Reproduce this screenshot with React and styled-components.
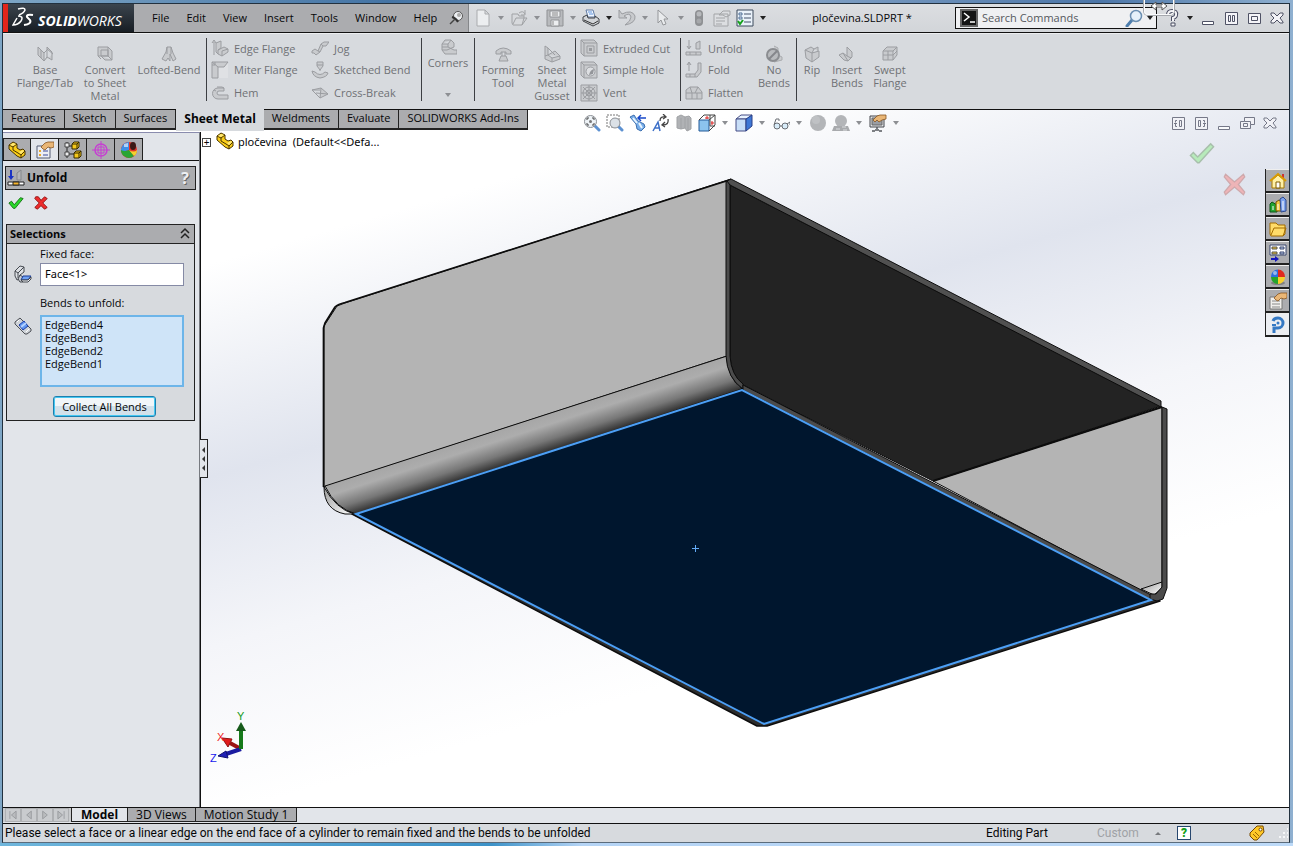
import React, { useState } from "react"
import styled, { createGlobalStyle, css } from "styled-components"

const GlobalStyle = createGlobalStyle`
  * {
    box-sizing: border-box;
  }

  body {
    margin: 0;
    font-family: "Open Sans", "Noto Sans", sans-serif;
    font-size: 11px;
    line-height: 14px;
    color: #050608;
  }

  button, input {
    font: inherit;
    color: inherit;
  }

  svg {
    display: block;
    flex: none;
  }
`

const plainButton = css`
  display: flex;
  align-items: center;
  justify-content: center;
  margin: 0;
  padding: 0;
  border: 0;
  background: none;
`

/* ---------- icons ---------- */

const G = { fill: "#c9cbce", stroke: "#9b9da1" }

const Ball = () => (
  <>
    <ellipse cx="9" cy="15" rx="7" ry="2" fill="#555" opacity=".5" />
    <path d="M9 9V1.500A7 7 0 0 0 2 9Z" fill="#2c6fe0" />
    <path d="M9 9V1.500A7 7 0 0 1 16 9Z" fill="#e02a20" />
    <path d="M9 9H2A7 7 0 0 0 9 16Z" fill="#25a52c" />
    <path d="M9 9H16A7 7 0 0 1 9 16Z" fill="#f6cf2d" />
    <circle cx="6" cy="5" r="2" fill="#fff" opacity=".5" />
  </>
)

const Hand = () => (
  <path d="M5 6 9 2 12 1H18V6L15 7 12 6 9 9 7 8Z" fill="#e9b676" stroke="#855422" strokeWidth=".8" />
)

const PartShape = () => (
  <>
    <path d="M1 4 5 1 9 3V7L12 9 15 8 17 10V14L13 17 9 15 1 8Z" fill="#f9cd18" stroke="#4a3500" />
    <path d="M1 4 5 6 9 3M5 6V9L10 12 13 14 17 10M13 14V17" fill="none" stroke="#4a3500" />
    <path d="M2 4 5 2 8 3 5 5Z M11 11 15 9 16 10 13 13Z" fill="#ffe979" />
  </>
)

const icons = {
  baseFlange: <path d="M2 2V10L8 16V8Z M8 16 11 12V4L17 9 M8 8 11 5 M11 12 16 15V7L11 2V4 M5 5V13" {...G} />,
  convert: <path d="M2 2H12V11H2Z M5 5H12V11H5Z M12 2 16 6V15L12 11 M5 11 9 15H16 M2 11 5 14" {...G} />,
  loft: <path d="M7 2H11L13 8 16 14 13 16 10 9V16L8 13 6 16 2 14 6 7Z M7 2V9 M11 2V9" {...G} />,
  edgeFlange: <path d="M3 16V3 M1 4 3 1 5 4 M5 4 10 2V9L7 11V15L5 13Z M7 11 13 8 17 10V13L11 17 7 15 M11 12V17 M11 12 17 10" {...G} />,
  miter: (
    <>
      <path d="M1 1H17V17H1Z" fill="#dfe1e4" />
      <path d="M1 1H17L13 6H7V17H1Z M1 1 7 6 M4 1V4 M1 4H4" {...G} />
    </>
  ),
  hem: <path d="M17 15H7A5 5 0 0 1 7 4H13V7H8A2 2 0 0 0 8 11H17Z M3 6 5 7 M13 4 11 3H6" {...G} />,
  jog: <path d="M1 12 4 10 7 12 10 5 13 3H18L15 7H12L9 13 5 16 3 14H1Z M7 12 9 13 M10 5 12 7" {...G} />,
  sketched: <path d="M6 1H12V5L9 9 6 5Z M6 4H12 M8 9H10 M1 10 4 11Q9 16 14 11L17 12Q16 16 9 17 2 16 1 10Z" {...G} />,
  cross: <path d="M1 6 10 4 17 10 9 14Z M1 6 9 14 10 4 M5 9 17 10 M1 6H9" {...G} />,
  corners: <path d="M3 6 6 2H12L15 5V9L8 12H3Z M3 6H9L12 2 M9 6V9L15 12H18V16H6L3 12 M9 9H3" {...G} />,
  forming: <path d="M2 6Q9 0 17 6V9H12V7H7V9H2Z M7 11H12L14 16H5Z M8 7V11 M11 7V11" {...G} />,
  gusset: <path d="M2 1 5 3V10L12 6 17 11V14L9 17 2 14Z M5 10 9 13 17 11 M5 3 12 10 M9 13V17 M2 11 5 10" {...G} />,
  cut: (
    <>
      <path d="M1 1H14L17 4V17H4L1 14Z M4 4H17 M4 4V17 M1 1 4 4 M7 7H14V14H7Z" {...G} />
      <path d="M9 9H12V12H9Z" fill="#999b9f" />
    </>
  ),
  hole: (
    <>
      <path d="M1 1H14L17 4V17H4L1 14Z M4 4H17 M4 4V17 M1 1 4 4" {...G} />
      <circle cx="10.500" cy="10.500" r="4.500" fill="#dddfe2" stroke="#9b9da1" />
      <path d="M9 14Q10 9 14 8L13 13Z" fill="#94969a" />
    </>
  ),
  vent: (
    <>
      <path d="M1 1H17V17H1Z" {...G} />
      <circle cx="9" cy="9" r="6" fill="none" stroke="#9b9da1" />
      <circle cx="9" cy="9" r="3" fill="none" stroke="#9b9da1" />
      <path d="M9 1V17M1 9H17M3 3 15 15M15 3 3 15" stroke="#9b9da1" />
    </>
  ),
  unfold: <path d="M4 1V9 M2 7 4 10 6 7 M1 13H16V16H1Z M5 13V16 M11 13V16 M11 10V4L15 2V10Z" {...G} />,
  fold: <path d="M4 10V2 M2 4 4 1 6 4 M1 13H10L13 9V2H16V11L12 16H1Z M5 13V16 M10 13V16" {...G} />,
  flatten: <path d="M1 6 5 3H13L17 8V15H1Z M1 9H17 M5 3 7 9V15 M13 3 10 9 M12 9V15" {...G} />,
  noBends: (
    <>
      <path d="M9 1 13 3V10L17 12V15L9 17" fill="#c9cbce" stroke="#a9abae" />
      <circle cx="8" cy="10" r="6" fill="#b9bbbe" stroke="#8b8d91" strokeWidth="2" />
      <path d="M12 6 4 14" stroke="#85878b" strokeWidth="2" />
    </>
  ),
  rip: <path d="M2 5 8 2 11 4 9 8 16 6V12L9 17 3 13Z M2 5 9 8V17 M11 4 15 2V6" {...G} />,
  insertBends: <path d="M1 10 5 8 9 11V2L14 7V12L10 16 6 15Z M9 11 13 13 M5 8 10 16" {...G} />,
  swept: <path d="M2 6 6 2H16V10L12 15H2Z M2 6H12V15 M12 6 16 2 M7 6V15 M2 10H12L16 6" {...G} />,
  pin: (
    <>
      <path d="M8 10 3 15" stroke="#444" strokeWidth="1.500" />
      <circle cx="11" cy="7" r="4.500" fill="#eef0f3" stroke="#555" />
      <circle cx="12" cy="6" r="2" fill="#aaa" />
      <path d="M5 8Q9 9 11 13" fill="none" stroke="#333" strokeWidth="2" />
    </>
  ),
  newFile: <path d="M3 1H11L15 5V17H3Z M11 1V5H15" fill="#eceef0" stroke="#a9abae" />,
  open: <path d="M2 5H8L9 7H14V9L12 16H3L2 14Z M3 15 6 9H17L12 16 M9 4Q13 1 15 5M15 1V6H11" fill="#d7d9dc" stroke="#a0a2a5" />,
  save: (
    <>
      <path d="M1 1H17V17H1Z" fill="#b9bbbe" stroke="#8f9194" />
      <path d="M4 2H14V8H4ZM5 11H13V17H5Z" fill="#eceef0" stroke="#909295" />
      <path d="M6 4H12M6 6H12M7 12V16" stroke="#888" />
    </>
  ),
  print: (
    <>
      <path d="M4 1H11L13 8H6Z" fill="#f2f7ff" stroke="#607ba3" />
      <path d="M6 3H10M7 5H11" stroke="#5c92dd" />
      <path d="M1 8 5 6 6 9H13V7L17 10V14L11 17 1 12Z" fill="#d2d5d9" stroke="#3e4146" />
      <path d="M2 11 11 15 16 12" fill="none" stroke="#333" />
    </>
  ),
  undo: <path d="M1 1V9H9L6 7Q12 3 13 8 13 12 7 16 18 14 17 7 14 0 4 5Z" fill="#c8cacd" stroke="#9b9da1" />,
  pointer: <path d="M4 1V14L7 11 9 16 12 15 10 10H14Z" fill="#e9ebed" stroke="#95979a" />,
  traffic: (
    <>
      <rect x="5" y="1" width="8" height="16" rx="4" fill="#8e9093" />
      <circle cx="9" cy="5" r="2.500" fill="#b7b9bc" />
      <circle cx="9" cy="12" r="2.500" fill="#a6a8ab" />
    </>
  ),
  fileProps: <path d="M1 5H15V17H1Z M3 9H12M3 12H12M3 15H9 M6 6 10 2H17V6L13 8 10 6Z" fill="#dcdee1" stroke="#a2a4a7" />,
  options: (
    <>
      <path d="M1 1H17V17H1Z" fill="#eaf2fa" stroke="#3d4a5c" />
      <path d="M8 5H15M8 9H15M8 13H15" stroke="#44536a" />
      <path d="M3 4H6V6H3ZM3 8H6V10H3Z" fill="none" stroke="#4f6f95" />
      <path d="M2 12 4 15 7 11" fill="none" stroke="#17a21d" strokeWidth="2" />
    </>
  ),
  zoomFit: (
    <>
      <path d="M12 12 16 16" stroke="#5d91d1" strokeWidth="3" strokeLinecap="round" />
      <circle cx="7.500" cy="7.500" r="6" fill="#eef3f7" stroke="#8a8e94" />
      <path d="M4 6V4H6M9 4H11V6M11 9V11H9M6 11H4V9" fill="none" stroke="#444" />
      <circle cx="7.500" cy="7.500" r="1.500" fill="#777" />
    </>
  ),
  zoomArea: (
    <>
      <path d="M1 1H13V13H1Z" fill="none" stroke="#777" strokeDasharray="2 1" />
      <path d="M13 13 16 16" stroke="#5d91d1" strokeWidth="3" strokeLinecap="round" />
      <circle cx="9" cy="9" r="5" fill="#dbe1e7" stroke="#8a8e94" />
    </>
  ),
  prevView: (
    <>
      <path d="M1 3 5 1 9 7 15 10 16 13 12 17 8 15 7 10Z" fill="#77ade9" stroke="#3d70b0" />
      <path d="M4 4 8 9M10 9 13 14" stroke="#e9f5ff" strokeWidth="2" />
      <path d="M17 4H10M12 1 9 4 12 7" fill="none" stroke="#1647c9" strokeWidth="1.500" />
    </>
  ),
  rotate: (
    <>
      <path d="M1 17 6 8 8 17M3 14H8" fill="none" stroke="#3d70c8" strokeWidth="1.500" />
      <path d="M8 7Q8 2 13 3M11 0 14 3 11 5M16 5Q17 11 11 11M13 8 10 11 13 13" fill="none" stroke="#444" strokeWidth="1.300" />
    </>
  ),
  section: <path d="M2 3 6 1 10 3 14 2 16 4V15L12 17 10 14 6 15 2 14Z M6 4V15 M10 3V14 M13 4V16" fill="#b0b2b5" stroke="#a0a2a5" />,
  orient: (
    <>
      <path d="M6 1H17V11L11 17V6H1Z" fill="#fff" />
      <path d="M1 6H11V17H1Z" fill="#8cc3ee" stroke="#245b98" />
      <path d="M1 6 6 1H17V11L11 17M11 6 17 1M12 1V12H17" fill="none" stroke="#444" />
      <path d="M9 2V5M7 4H11M14 7V11M13 9H16" stroke="#d22" />
    </>
  ),
  display: (
    <>
      <path d="M1 5 6 1H17L12 5Z" fill="#e9f3ff" stroke="#444c85" />
      <path d="M1 5H11V17H1Z" fill="#c8def7" stroke="#444c85" />
      <path d="M11 5 17 1V12L11 17Z" fill="#3f78d6" stroke="#2a3f85" />
    </>
  ),
  glasses: (
    <>
      <circle cx="5" cy="12" r="3" fill="#d7ebf8" stroke="#6a6e74" />
      <circle cx="13" cy="12" r="3" fill="#d7ebf8" stroke="#6a6e74" />
      <path d="M2 11 4 5H7V7M8 12H10M15 10 18 8V11" fill="none" stroke="#6a6e74" />
    </>
  ),
  greyBall: (
    <>
      <circle cx="9" cy="9" r="8" fill="#b3b5b8" />
      <circle cx="7" cy="6" r="4" fill="#bfc1c4" />
    </>
  ),
  scene: (
    <>
      <circle cx="9" cy="7" r="6" fill="#b3b5b8" />
      <path d="M2 12H16L18 17H0Z" fill="#a8aaad" />
      <path d="M4 15H8M10 13H14M11 16H15" stroke="#d9dbde" />
    </>
  ),
  viewSettings: (
    <>
      <path d="M1 2H15V13H1Z" fill="#e3e5e8" stroke="#44474d" />
      <path d="M3 4H13V11H3Z" fill="#9b9ea4" stroke="#666" />
      <path d="M6 16H10M3 17H6M10 17H13M8 13V15" stroke="#55585e" strokeWidth="1.500" />
      <path d="M4 6 8 2 11 1H17V5L13 6 10 8 8 6 6 8Z" fill="#e9b676" stroke="#855422" strokeWidth=".8" />
    </>
  ),
  part: <PartShape />,
  propMgr: (
    <>
      <path d="M1 5H14V17H1Z" fill="#eceef4" stroke="#555d75" />
      <path d="M3 9H5V11H3ZM3 13H5V15H3Z" fill="#e9a92e" />
      <path d="M7 10H12M7 14H12" stroke="#3a4a9c" />
      <Hand />
    </>
  ),
  config: (
    <>
      <path d="M3 1V17M3 5H9M3 13H10" stroke="#222" />
      <path d="M1 2H5V6H1ZM1 11H5V15H1Z" fill="#eee" stroke="#444" />
      <path d="M8 3 10 1H15V6L13 8H8ZM10 12 12 10H17V15L15 17H10Z" fill="#f5c91a" stroke="#352900" />
      <path d="M8 3H13V8M13 3 15 1M10 12H15V17M15 12 17 10" stroke="#352900" fill="none" />
    </>
  ),
  target: (
    <>
      <circle cx="9" cy="9" r="6" fill="none" stroke="#c63fd2" strokeWidth="1.500" />
      <path d="M9 0V18M0 9H18M6 6H12V12H6Z" fill="none" stroke="#c63fd2" />
    </>
  ),
  ball: <Ball />,
  displayMgr: (
    <>
      <circle cx="9" cy="9" r="8" fill="#e5352b" />
      <path d="M1 8Q3 1 9 1V9Q4 11 1 10Z" fill="#3d8fe8" />
      <path d="M1 9Q5 11 9 9L14 15Q9 19 4 15 1 13 1 9Z" fill="#2aa534" />
      <path d="M9 9Q14 12 17 9 17 13 14 15Z" fill="#f3d32e" />
      <ellipse cx="13" cy="5" rx="3" ry="4" fill="#3b1a15" />
      <path d="M4 3 8 2V6H4Z" fill="#fff" opacity=".6" />
    </>
  ),
  unfoldBlue: (
    <>
      <path d="M4 1V8" fill="none" stroke="#1a33c4" strokeWidth="2" />
      <path d="M1 7H7L4 11Z" fill="#1a33c4" />
      <path d="M10 11V4L14 1V11Z" fill="#b4b5b8" stroke="#85878b" />
      <path d="M1 13H17V16H1Z" fill="#fff" stroke="#222" />
      <path d="M6 13H12V16H6Z" fill="#f7b52d" stroke="#222" />
    </>
  ),
  ok: <path d="M1 9 4 7 7 11 14 3 17 4 8 15 6 15Z" fill="#29d829" stroke="#126e12" />,
  cancel: <path d="M3 2H6L9 6 13 2 16 4 11 9 16 14 13 16 9 12 5 16 2 14 7 9 2 4Z" fill="#ee2c2c" stroke="#8c1111" />,
  accept: <path d="M1 10 3 8 6 11 15 2 17 4 7 15 6 15Z" fill="#a4eca4" stroke="#8fae8f" />,
  discard: <path d="M2 1 9 7 16 1 17 3 12 9 17 15 16 17 9 11 2 17 1 15 6 9 1 3Z" fill="#f5a0a0" stroke="#c79090" />,
  fixedFace: (
    <>
      <path d="M1 6 6 1 10 2V7L6 10V14L3 15 1 11Z M1 6 4 8 10 2M4 8V13" fill="#dfe3e8" stroke="#44484f" />
      <path d="M4 14 6 10 9 12V17L6 17Z" fill="#c6cad0" stroke="#44484f" />
      <path d="M9 11H17L14 15H7Z" fill="#6d9ff2" stroke="#1a3a92" />
      <path d="M7 15H14L17 12V14L14 17H9Z" fill="#eef1f5" stroke="#44484f" />
    </>
  ),
  bends: (
    <>
      <path d="M1 5 6 1 17 12V14L13 17H11L1 7Z" fill="#cfd3d8" stroke="#4c4f55" />
      <path d="M5 8 10 4 14 9 9 13Z" fill="#5f95f0" stroke="#1d3fa8" />
      <path d="M7 10 12 6" stroke="#b5d2ff" strokeWidth="2" />
      <path d="M3 5 5 3M12 15 15 12" stroke="#fff" />
    </>
  ),
  house: (
    <>
      <path d="M3 8V16H15V8L9 3Z" fill="#fff1a8" stroke="#a87800" />
      <path d="M13 2H15V6H13Z" fill="#c33" />
      <path d="M1 9 9 2 17 9" fill="none" stroke="#d99b00" strokeWidth="2" />
      <path d="M7 10H11V16H7Z" fill="#fff" stroke="#805c00" />
    </>
  ),
  library: (
    <>
      <path d="M1 8 3 6 8 9V16H1Z" fill="#22a532" stroke="#0c5416" />
      <path d="M7 6 10 4 13 6V15H7Z" fill="#f3c83a" stroke="#735400" />
      <path d="M11 3 14 1 17 4V15L12 16Z" fill="#7da2ec" stroke="#2b478e" />
      <path d="M4 10V14M9 8V14M14 5V14" stroke="#fff" />
    </>
  ),
  folder: <path d="M1 3H7L9 5H16V14L14 16H2L1 14Z M2 15 5 8H17L14 16" fill="#ffdc69" stroke="#a36c00" />,
  palette: (
    <>
      <path d="M1 1H17V11H1Z" fill="#fff" stroke="#39476e" />
      <path d="M3 3H8V5H3ZM3 8H8V10H3Z" fill="#f0c32c" stroke="#555" />
      <path d="M11 3H15V5H11ZM11 8H15V10H11Z" fill="#b9c9e8" stroke="#39476e" />
      <path d="M2 15H7" stroke="#1616bd" strokeWidth="2" />
      <path d="M6 12 10 15 6 18Z" fill="#1616bd" />
    </>
  ),
  custProps: (
    <>
      <path d="M1 5H13V17H1Z" fill="#f0efec" stroke="#777" />
      <path d="M3 9H11M3 12H11M3 15H11" stroke="#888" />
      <Hand />
    </>
  ),
  forum: (
    <>
      <path d="M4 5Q5 2 9 2A5 5 0 0 1 9 12H5V17" fill="none" stroke="#3579c4" strokeWidth="3" />
      <path d="M3 9H7" stroke="#3579c4" strokeWidth="2" />
      <circle cx="9" cy="7" r="1.500" fill="#3579c4" />
    </>
  ),
  command: (
    <>
      <path d="M1 1H17V17H1Z" fill="#151515" stroke="#666" strokeWidth="2" />
      <path d="M4 4 9 8 4 12M10 13H15" fill="none" stroke="#fff" strokeWidth="1.500" />
    </>
  ),
  search: (
    <>
      <path d="M7 11 2 17" stroke="#4f7fae" strokeWidth="3" strokeLinecap="round" />
      <circle cx="11" cy="7" r="5.500" fill="#e6f1fa" stroke="#6b8fb2" strokeWidth="1.500" />
    </>
  ),
  help: (
    <>
      <path d="M5 6Q5 2 9 2 14 2 13 6 13 8 10 9V12" fill="none" stroke="#4b4e63" strokeWidth="4" />
      <path d="M5 6Q5 2 9 2 14 2 13 6 13 8 10 9V12" fill="none" stroke="#f5f5f7" strokeWidth="2" />
      <path d="M8 14H12V17H8Z" fill="#f5f5f7" stroke="#4b4e63" />
    </>
  ),
  minimize: <path d="M3.500 12.500H14.500V15.500H3.500Z" fill="#fff" stroke="#4f5265" />,
  split: <path d="M3.500 3.500H15.500V15.500H3.500Z M6.500 6.500H8.500V12.500H6.500Z M10.500 6.500H12.500V12.500H10.500Z" fill="#f4f4f8" stroke="#4f5265" />,
  maximize: <path d="M3.500 4.500H15.500V14.500H3.500Z M6.500 7.500H12.500V11.500H6.500Z" fill="#f4f4f8" stroke="#4f5265" />,
  close: <path d="M3 4H6L9 7 12 4H15V6L12 9 15 13V14H12L9 11 6 14H3V12L6 9 3 6Z" fill="#f4f4f8" stroke="#4f5265" />,
  restore: <path d="M6.500 3.500H16.500V10.500H12.500V14.500H2.500V7.500H6.500Z M6.500 7.500H12.500V10.500 M5.500 9.500H9.500V12.500H5.500Z" fill="#f4f4f8" stroke="#4f5265" />,
  dockLeft: <path d="M3.500 3.500H15.500V15.500H3.500Z M10.500 6.500H12.500V12.500H10.500Z M8 6.500H6.500V8.500 M6.500 10V12.500H8 M5 9.500H8" fill="#f4f4f8" stroke="#4f5265" />,
  dockRight: <path d="M3.500 3.500H15.500V15.500H3.500Z M6.500 6.500H8.500V12.500H6.500Z M11 6.500H12.500V8.500 M12.500 10V12.500H11 M11 9.500H14" fill="#f4f4f8" stroke="#4f5265" />,
  tag: (
    <>
      <path d="M2 9 9 2H15L16 8 9 16 6 16 2 12Z" fill="#ffc928" stroke="#754800" />
      <circle cx="12.500" cy="5.500" r="1.500" fill="#fff" stroke="#754800" />
      <path d="M5 10 9 14M7 8 11 12" stroke="#9b6500" />
    </>
  ),
  collapse: <path d="M5 8 9 4 13 8M5 13 9 9 13 13" fill="none" stroke="#222" strokeWidth="1.500" />,
  first: <path d="M5 4V14M13 4 7 9 13 14Z" fill="#b9bbbe" stroke="#929498" />,
  prev: <path d="M12 4 6 9 12 14Z" fill="#b9bbbe" stroke="#929498" />,
  next: <path d="M6 4 12 9 6 14Z" fill="#b9bbbe" stroke="#929498" />,
  last: <path d="M13 4V14M5 4 11 9 5 14Z" fill="#b9bbbe" stroke="#929498" />,
}

const Icon = ({ name, size = 18 }) => (
  <svg width={size} height={size} viewBox="0 0 18 18" aria-hidden="true">
    {icons[name]}
  </svg>
)

/* ---------- window frame ---------- */

const Desktop = styled.div`
  display: flex;
  min-height: 100vh;
  padding: 3px 3px 4px 2px;
  background:
    linear-gradient(90deg, #6fb6dc, #3c92c8 38%, #b5d4f5 45%, #bddaf8) bottom / 100% 4px no-repeat,
    linear-gradient(90deg, #7ea6c6, #4474a5 30%, #86a5c8 60%, #4c76a8 85%, #8fb0d0);
  position: relative;
`

const Frame = styled.div`
  flex: 1;
  min-width: 0;
  display: flex;
  flex-direction: column;
  border: 1px solid #22313f;
  border-bottom-color: #5b6c7c;
  background: #d7dade;
`

/* resize pointer that hangs over the top edge of the window */
const DragCursor = styled.div`
  position: absolute;
  top: 0;
  right: 119px;
  width: 30px;
  height: 15px;
  border: 1px solid #fafbfc;
  border-top: 0;
  border-radius: 0 0 4px 4px;
  box-shadow: 0 0 0 1px #a5a8ad;
`

const TitleBar = styled.header`
  display: flex;
  align-items: stretch;
  height: 29px;
  border-bottom: 1px solid #111;
  background: linear-gradient(#dcdee1, #d2d5d9);
`

const Brand = styled.div`
  display: flex;
  align-items: center;
  width: 131px;
  padding-left: 4px;
  border-left: 5px solid #e1251b;
  background: linear-gradient(#3b444d, #171d23);
  color: #fff;
  font-size: 14px;
  font-weight: 700;
  font-style: italic;

  span {
    padding: 5px 0 0 4px;
  }

  i {
    font-weight: 400;
  }
`

const Menu = styled.nav`
  display: flex;
  align-items: center;
  gap: 17px;
  width: 335px;
  padding-left: 18px;
  background: #abacaf;
  border-right: 1px solid #85878a;

  a {
    color: inherit;
    text-decoration: none;
  }

  svg {
    margin-left: -7px;
  }
`

const IconButton = styled.button`
  ${plainButton}
  width: 23px;
  height: 20px;
`

const Arrow = styled.button`
  ${plainButton}
  width: ${props => props.$w || 13}px;
  height: 20px;

  &::after {
    content: "";
    border: 3px solid transparent;
    border-top: 4px solid ${props => (props.$dim ? "#8d8f93" : "#222")};
    border-bottom: 0;
  }
`

const QuickBar = styled.div`
  display: flex;
  align-items: center;
  padding-left: 2px;
`

const DocTitle = styled.div`
  flex: 1;
  align-self: center;
  text-align: center;
`

const SearchBox = styled.label`
  display: flex;
  align-items: center;
  align-self: center;
  width: 202px;
  height: 22px;
  padding-left: 4px;
  border: 1px solid #111;
  background: #eff0f2;
  overflow: hidden;

  input {
    flex: 1;
    min-width: 0;
    padding: 0 4px;
    border: 0;
    outline: 0;
    background: none;
  }

  input::placeholder {
    color: #55585d;
    opacity: 1;
  }
`

const WindowButtons = styled.div`
  display: flex;
  align-items: center;
  padding: 0 1px 0 3px;
`

/* ---------- ribbon ---------- */

const Ribbon = styled.div`
  display: flex;
  height: 77px;
  padding: 4px 0 8px;
  border-top: 1px solid #eceef0;
  border-bottom: 1px solid #111;
  background: #d7dade;
  color: #6f7175;
  line-height: 13px;
`

const Group = styled.div`
  display: flex;
  width: ${props => props.$w}px;
  padding-left: ${props => props.$pad || 0}px;
  border-right: ${props => (props.$last ? "0" : "1px solid #3c3e42")};
`

const BigButton = styled.button`
  ${plainButton}
  flex-direction: column;
  justify-content: flex-start;
  width: ${props => props.$w}px;
  padding-top: ${props => (props.$high ? 0 : 7)}px;
  line-height: 13px;
  white-space: pre;

  ${Arrow} {
    margin-top: 19px;
  }
`

const Column = styled.div`
  display: flex;
  flex-direction: column;
  width: ${props => props.$w}px;
`

const SmallButton = styled.button`
  ${plainButton}
  flex: none;
  justify-content: flex-start;
  gap: 5px;
  height: 23px;
  padding-left: 4px;
  white-space: nowrap;

  &:first-child {
    height: 20px;
  }
`

const Big = ({ icon, label, w, high, arrow }) => (
  <BigButton $w={w} $high={high}>
    <Icon name={icon} />
    <span>{label}</span>
    {arrow && <Arrow as="span" $dim />}
  </BigButton>
)

const Stack = ({ w, items }) => (
  <Column $w={w}>
    {items.map(([icon, label]) => (
      <SmallButton key={label}>
        <Icon name={icon} />
        {label}
      </SmallButton>
    ))}
  </Column>
)

/* ---------- workspace ---------- */

const Workspace = styled.main`
  flex: 1;
  display: flex;
  flex-direction: column;
  background: linear-gradient(164deg, #fff 20%, #e0e4ee 40%, #f4f5f9 56%, #fff 72%);
`

const TopStrip = styled.div`
  display: flex;
  height: 22px;
`

const CommandTabs = styled.div`
  display: flex;
  align-items: flex-start;
  width: 577px;
`

const CommandTab = styled.button`
  ${plainButton}
  height: ${props => (props.$active ? 22 : 20)}px;
  margin-top: ${props => (props.$active ? -1 : 0)}px;
  padding: 0 8px 2px;
  border: solid #222;
  border-width: ${props => (props.$active ? "0" : "0 1px 2px 0")};
  background: ${props => (props.$active ? "#d7dade" : "#abacaf")};
  font-size: ${props => (props.$active ? 12 : 11)}px;
  font-weight: ${props => (props.$active ? 700 : 400)};
  white-space: nowrap;
`

const HeadsUp = styled.div`
  display: flex;
  align-items: flex-start;
  padding-top: 3px;
`

const MdiButtons = styled.div`
  display: flex;
  margin-left: auto;
  padding: 3px 8px 0 0;
  opacity: 0.75;
`

const Body = styled.div`
  flex: 1;
  display: flex;
`

const Panel = styled.aside`
  width: 197px;
  padding: 5px 0 0;
  background: #e2e5ea;
  border-right: 1px solid #777a80;
  box-shadow: 1px 0 0 #111;
  border-top: 1px solid #8a8cae;
`

const PanelTabs = styled.div`
  display: flex;
  border-bottom: 1px solid #111;
`

const PanelTab = styled.button`
  ${plainButton}
  width: 28px;
  height: 22px;
  border: 1px solid #222;
  border-left-width: ${props => (props.$first ? 1 : 0)}px;
  border-bottom: 0;
  margin-bottom: ${props => (props.$active ? -1 : 0)}px;
  background: ${props => (props.$active ? "#e2e5ea" : "#abacaf")};
`

const PanelTitle = styled.h2`
  display: flex;
  align-items: center;
  gap: 2px;
  height: 24px;
  margin: 5px 3px 0 2px;
  padding: 0 3px 0 1px;
  border: 1px solid #222;
  background: #abacaf;
  font-size: 12px;

  button {
    ${plainButton}
    margin-left: auto;
    width: 14px;
    color: #eef0f3;
    font-size: 16px;
    font-weight: 700;
    text-shadow: 1px 1px 0 #666;
  }
`

const Confirm = styled.div`
  display: flex;
  gap: 2px;
  padding: 3px 0 0 1px;
`

const Section = styled.section`
  margin: 11px 4px 0 3px;
  border: 1px solid #222;
  background: #d7dade;
`

const SectionHeader = styled.h3`
  display: flex;
  align-items: center;
  justify-content: space-between;
  height: 19px;
  margin: 0;
  padding: 0 0 0 3px;
  border-bottom: 1px solid #222;
  background: #abacaf;
  font-size: 11px;
`

const Field = styled.div`
  display: grid;
  grid-template-columns: 33px 144px;
  padding-top: ${props => props.$top}px;

  svg {
    margin: 2px 0 0 7px;
  }

  label {
    grid-column: 2;
    margin-bottom: 2px;
  }

  .caption {
    grid-column: 2;
    margin-bottom: 5px;
  }

  input {
    height: 23px;
    padding: 0 4px 2px;
    border: 1px solid #858aa5;
    background: #fff;
    font-family: "Noto Sans", sans-serif;
  }
`

const BendList = styled.ul`
  height: 72px;
  margin: 0;
  padding: 1px 3px;
  border: 2px solid #6db5e9;
  background: #cfe4f8;
  list-style: none;
  line-height: 13px;
`

const CollectButton = styled.button`
  ${plainButton}
  width: 103px;
  height: 21px;
  margin: 9px 0 3px 46px;
  border: 1px solid #1d7fae;
  border-radius: 3px;
  box-shadow: inset 0 0 0 1px #45c8f2;
  background: linear-gradient(#f1f6f9 50%, #d3e1ea 50%);
`

/* every overlay shares the one grid cell with the model */
const Viewport = styled.div`
  flex: 1;
  min-width: 0;
  display: grid;
  grid-template: 1fr / 1fr;

  > * {
    grid-area: 1 / 1;
  }
`

const Model = styled.svg`
  width: 100%;
  height: 100%;
`

const Tree = styled.div`
  align-self: start;
  justify-self: start;
  display: flex;
  align-items: center;
  padding-left: 2px;
  font-family: "Noto Sans", sans-serif;
  white-space: pre;

  svg {
    margin: 0 4px 2px 5px;
  }
`

const Expander = styled.button`
  ${plainButton}
  width: 9px;
  height: 9px;
  border: 1px solid #444;
  background: #fff;
  font-size: 10px;
  line-height: 7px;
`

const Handle = styled.button`
  ${plainButton}
  align-self: start;
  flex-direction: column;
  gap: 3px;
  width: 8px;
  height: 39px;
  margin-top: 307px;
  border: 1px solid #222;
  border-left: 0;
  background: #e2e5ea;

  i {
    border: 3px solid transparent;
    border-right: 3px solid #333;
    border-left: 0;
  }
`

const Corner = styled.div`
  align-self: start;
  justify-self: end;
  display: flex;
  gap: 10px;
  padding: 12px 43px 0 0;
  opacity: 0.7;

  button:last-child {
    margin-top: 30px;
  }
`

const TaskPane = styled.div`
  align-self: start;
  justify-self: end;
  margin-top: 37px;
  border: solid #222;
  border-width: 0 0 0 1px;
`

const TaskTab = styled.button`
  ${plainButton}
  width: 23px;
  height: 24px;
  border-top: 1px solid #eee;
  border-bottom: 2px solid #222;
  background: ${props => (props.$active ? "#eceef2" : "#abacaf")};
`

/* ---------- footer ---------- */

const ViewTabs = styled.div`
  display: flex;
  align-items: flex-start;
  height: 17px;
  border: solid #111;
  border-width: 1px 0;
  background: #e2e5ea;
  font-size: 12px;
`

const Player = styled.div`
  display: flex;
  padding-left: 2px;
  width: 68px;
  background: #c9cbce;

  button {
    ${plainButton}
    width: 16px;
    height: 14px;
    border: 1px solid #aeb0b3;
  }
`

const ViewTab = styled.button`
  ${plainButton}
  height: 14px;
  padding: 0 ${props => (props.$active ? 9 : 8)}px;
  border: solid #222;
  border-width: 0 1px 1px ${props => (props.$active ? 1 : 0)}px;
  background: ${props => (props.$active ? "#e2e5ea" : "#abacaf")};
  font-weight: ${props => (props.$active ? 700 : 400)};
  line-height: 12px;
`

const StatusBar = styled.footer`
  display: flex;
  align-items: center;
  height: 18px;
  padding: 0 1px 0 2px;
  background: #d7dade;
  font-family: Roboto, sans-serif;
  font-size: 12px;

  > :nth-child(2) {
    margin-left: auto;
    width: 111px;
  }
`

const UnitButton = styled.button`
  ${plainButton}
  gap: 16px;
  width: 80px;
  justify-content: flex-start;
  color: #a0a2a6;

  &::after {
    content: "";
    border: 3px solid transparent;
    border-bottom: 3px solid #77797d;
    border-top: 0;
  }
`

const HelpButton = styled.button`
  ${plainButton}
  width: 14px;
  height: 14px;
  border: 1px solid #27476e;
  background: #fff;
  color: #15a01b;
  font-weight: 900;
`

const TagButton = styled.button`
  ${plainButton}
  margin: 0 12px 0 57px;
`

const Box3D = () => (
  <Model viewBox="200 132 1089 675" aria-label="Sheet metal part">
    <defs>
      <linearGradient id="bend" gradientUnits="userSpaceOnUse" x1="525" y1="421" x2="536" y2="455">
        <stop offset="0" stopColor="#a6a6a6" />
        <stop offset=".3" stopColor="#adadad" />
        <stop offset=".7" stopColor="#777" />
        <stop offset="1" stopColor="#333" />
      </linearGradient>
      <linearGradient id="lip" x1="0" y1="0" x2="1" y2="1">
        <stop offset="0" stopColor="#999" />
        <stop offset="1" stopColor="#fff" />
      </linearGradient>
    </defs>
    <g stroke="#0c0c0c" strokeWidth="1" strokeLinejoin="round">
      <path d="M352 514 757 726H767L1160 601 1151 598 742 389 356 514Z" fill="#2c2c2c" strokeWidth="1.500" />
      <path d="M324 487V326L337 306 345 303 731 179 727 183V356Z" fill="#b4b4b4" />
      <path d="M323.500 487V328L325 323 335 307Q338 304 345 302.500L731 179.500" fill="none" strokeWidth="1.700" />
      <path d="M325 486 727 356Q728 379 742 389L356 514Q336 509 325 486Z" fill="url(#bend)" />
      <path d="M324 487Q324 510 345 514L354 514Q336 509 324 487Z" fill="url(#lip)" />
      <path d="M730 185 1161 406 933 481 743 385Q731 375 730 356Z" fill="#232323" />
      <path d="M726 182 730 180V356Q731 375 743 384V389Q727 378 726 356Z" fill="#4b4b4b" />
      <path d="M727 181 731 179 1161 401V407L730 185Z" fill="#505050" />
      <path d="M933 481 1162 407V584L1152 597Z" fill="#b4b4b4" />
      <path d="M933 481 1162 407" strokeWidth="2" />
      <path d="M1141 589 1162 582V588L1154 595Z" fill="url(#lip)" />
      <path d="M743 385 1151 595V600L743 390Z" fill="#4b4b4b" />
      <path d="M1162 407 1167 409V588L1163 599 1157 601 1150 599V594L1156 594 1162 587Z" fill="#4b4b4b" />
    </g>
    <path d="M356 514 742 390 1151 600 764 724Z" fill="#00162e" stroke="#4c9ff5" strokeWidth="2" />
    <path d="M692 548.500H699M695.500 545V552" stroke="#63aaf5" />
    <path d="M241 749 230 743" stroke="#9b1515" strokeWidth="4" />
    <path d="M222 738 232 739 228 747Z" fill="#e01c1c" stroke="#8e1010" />
    <path d="M241 749 226 754" stroke="#1b1ba0" strokeWidth="4" />
    <path d="M218 756 226 751 228 758Z" fill="#2020b6" stroke="#11116f" />
    <path d="M241 749V730" stroke="#167a1a" strokeWidth="4" />
    <path d="M241 722 236 731H246Z" fill="#165a1a" />
    <g fontFamily="Liberation Sans, sans-serif" fontSize="11">
      <text x="237" y="720" fill="#159a1a">Y</text>
      <text x="217" y="741" fill="#ee2222">X</text>
      <text x="210" y="762" fill="#1818ee">Z</text>
    </g>
  </Model>
)

const Tools = ({ items, arrowWidth }) =>
  items.map(([icon, arrow]) => (
    <React.Fragment key={icon}>
      <IconButton aria-label={icon}>
        <Icon name={icon} />
      </IconButton>
      {arrow && <Arrow aria-label={`${icon} menu`} $dim={arrow === "dim"} $w={arrowWidth} />}
    </React.Fragment>
  ))

const quickTools = [
  ["newFile", "dim"], ["open", "dim"], ["save", "dim"], ["print", "dark"], ["undo", "dim"],
  ["pointer", "dim"], ["traffic"], ["fileProps"], ["options", "dark"],
]

const viewTools = [
  ["zoomFit"], ["zoomArea"], ["prevView"], ["rotate"], ["section"], ["orient", "dim"],
  ["display", "dim"], ["glasses", "dim"], ["greyBall"], ["scene", "dim"], ["viewSettings", "dim"],
]

const commandTabs = ["Features", "Sketch", "Surfaces", "Sheet Metal", "Weldments", "Evaluate", "SOLIDWORKS Add-Ins"]

export default () => {
  const [tab, setTab] = useState("Sheet Metal")
  const [viewTab, setViewTab] = useState("Model")

  return (
    <Desktop>
      <GlobalStyle />
      <Frame>
        <TitleBar>
          <Brand>
            <svg width="22" height="22" viewBox="0 0 22 22" fill="none" stroke="#fff" strokeWidth="1.500">
              <path d="M6 2Q13 0 13 3 12 6 7 8M6 9Q12 9 9 14 6 18 1 18L5 11" />
              <path d="M21 8Q14 7 15 10L18 13Q20 17 12 18" strokeWidth="2" />
            </svg>
            <span>SOLID<i>WORKS</i></span>
          </Brand>
          <Menu>
            {["File", "Edit", "View", "Insert", "Tools", "Window", "Help"].map(item => (
              <a key={item} href={`#${item.toLowerCase()}`}>{item}</a>
            ))}
            <Icon name="pin" />
          </Menu>
          <QuickBar>
            <Tools items={quickTools} />
          </QuickBar>
          <DocTitle>pločevina.SLDPRT *</DocTitle>
          <SearchBox>
            <Icon name="command" />
            <input placeholder="Search Commands" aria-label="Search Commands" />
            <Icon name="search" />
            <Arrow />
          </SearchBox>
          <WindowButtons>
            <Tools items={[["help", "dark"], ["minimize"], ["split"], ["maximize"], ["close"]]} />
          </WindowButtons>
        </TitleBar>

        <Ribbon>
          <Group $w={204} $pad={12}>
            <Big icon="baseFlange" label={"Base\nFlange/Tab"} w={60} />
            <Big icon="convert" label={"Convert\nto Sheet\nMetal"} w={60} />
            <Big icon="loft" label="Lofted-Bend" w={68} />
          </Group>
          <Group $w={215}>
            <Stack w={100} items={[["edgeFlange", "Edge Flange"], ["miter", "Miter Flange"], ["hem", "Hem"]]} />
            <Stack w={110} items={[["jog", "Jog"], ["sketched", "Sketched Bend"], ["cross", "Cross-Break"]]} />
          </Group>
          <Group $w={53}>
            <Big icon="corners" label="Corners" w={53} high arrow />
          </Group>
          <Group $w={101} $pad={2}>
            <Big icon="forming" label={"Forming\nTool"} w={52} />
            <Big icon="gusset" label={"Sheet\nMetal\nGusset"} w={46} />
          </Group>
          <Group $w={105}>
            <Stack w={100} items={[["cut", "Extruded Cut"], ["hole", "Simple Hole"], ["vent", "Vent"]]} />
          </Group>
          <Group $w={116}>
            <Stack w={72} items={[["unfold", "Unfold"], ["fold", "Fold"], ["flatten", "Flatten"]]} />
            <Big icon="noBends" label={"No\nBends"} w={42} />
          </Group>
          <Group $w={120} $last>
            <Big icon="rip" label="Rip" w={30} />
            <Big icon="insertBends" label={"Insert\nBends"} w={40} />
            <Big icon="swept" label={"Swept\nFlange"} w={46} />
          </Group>
        </Ribbon>

        <Workspace>
          <TopStrip>
            <CommandTabs>
              {commandTabs.map(name => (
                <CommandTab key={name} $active={name === tab} onClick={() => setTab(name)}>
                  {name}
                </CommandTab>
              ))}
            </CommandTabs>
            <HeadsUp>
              <Tools items={viewTools} arrowWidth={14} />
            </HeadsUp>
            <MdiButtons>
              <Tools items={[["dockLeft"], ["dockRight"], ["minimize"], ["restore"], ["close"]]} />
            </MdiButtons>
          </TopStrip>

          <Body>
            <Panel>
              <PanelTabs>
                {["part", "propMgr", "config", "target", "displayMgr"].map((name, i) => (
                  <PanelTab key={name} aria-label={name} $first={i === 0} $active={i === 1}>
                    <Icon name={name} />
                  </PanelTab>
                ))}
              </PanelTabs>
              <PanelTitle>
                <Icon name="unfoldBlue" />
                Unfold
                <button>?</button>
              </PanelTitle>
              <Confirm>
                <IconButton aria-label="OK"><Icon name="ok" size={16} /></IconButton>
                <IconButton aria-label="Cancel"><Icon name="cancel" size={16} /></IconButton>
              </Confirm>
              <Section>
                <SectionHeader>
                  Selections
                  <Icon name="collapse" />
                </SectionHeader>
                <Field $top={3}>
                  <label htmlFor="face">Fixed face:</label>
                  <Icon name="fixedFace" />
                  <input id="face" defaultValue="Face<1>" />
                </Field>
                <Field $top={10}>
                  <span className="caption" id="bends">Bends to unfold:</span>
                  <Icon name="bends" />
                  <BendList role="listbox" aria-labelledby="bends">
                    {[4, 3, 2, 1].map(n => (
                      <li key={n} role="option" aria-selected="false">EdgeBend{n}</li>
                    ))}
                  </BendList>
                </Field>
                <CollectButton>Collect All Bends</CollectButton>
              </Section>
            </Panel>

            <Viewport>
              <Box3D />
              <Tree>
                <Expander aria-label="Expand">+</Expander>
                <Icon name="part" />
                {"pločevina  (Default<<Defa..."}
              </Tree>
              <Handle aria-label="Collapse panel"><i /><i /><i /></Handle>
              <Corner>
                <IconButton aria-label="Accept"><Icon name="accept" size={26} /></IconButton>
                <IconButton aria-label="Discard"><Icon name="discard" size={23} /></IconButton>
              </Corner>
              <TaskPane>
                {["house", "library", "folder", "palette", "ball", "custProps", "forum"].map(name => (
                  <TaskTab key={name} aria-label={name} $active={name === "forum"}>
                    <Icon name={name} />
                  </TaskTab>
                ))}
              </TaskPane>
            </Viewport>
          </Body>
        </Workspace>

        <ViewTabs>
          <Player>
            {["first", "prev", "next", "last"].map(name => (
              <button key={name} aria-label={name}><Icon name={name} size={14} /></button>
            ))}
          </Player>
          {["Model", "3D Views", "Motion Study 1"].map(name => (
            <ViewTab key={name} $active={name === viewTab} onClick={() => setViewTab(name)}>
              {name}
            </ViewTab>
          ))}
        </ViewTabs>
        <StatusBar>
          <span>Please select a face or a linear edge on the end face of a cylinder to remain fixed and the bends to be unfolded</span>
          <span>Editing Part</span>
          <UnitButton>Custom</UnitButton>
          <HelpButton aria-label="Help">?</HelpButton>
          <TagButton aria-label="Tags"><Icon name="tag" /></TagButton>
          <svg width="10" height="10" viewBox="0 0 10 10" stroke="#f5f6f8" strokeWidth="2" strokeDasharray="2 2">
            <path d="M1 9H10M5 5H10M9 1H10" />
          </svg>
        </StatusBar>
      </Frame>
      <DragCursor>
        <svg width="28" height="12" viewBox="0 0 28 12">
          <path d="M6 6 11 2V5H17V2L22 6 17 10V7H11V10Z" fill="#fff" stroke="#555" />
        </svg>
      </DragCursor>
    </Desktop>
  )
}
